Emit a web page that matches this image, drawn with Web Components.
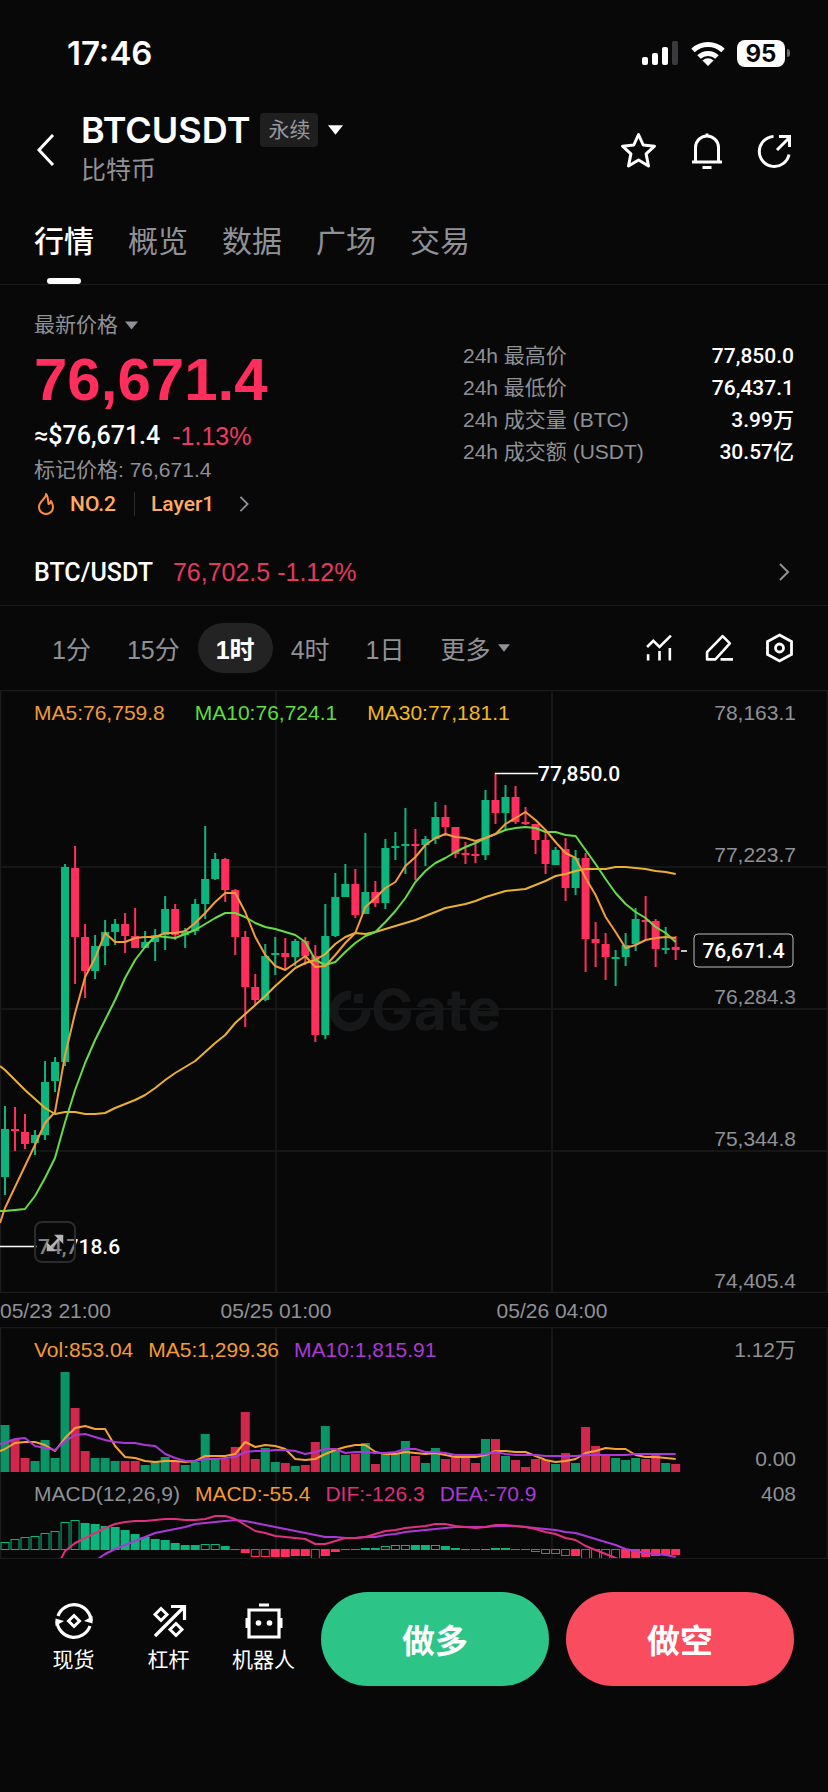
<!DOCTYPE html>
<html lang="zh-CN">
<head>
<meta charset="utf-8">
<meta name="viewport" content="width=device-width, initial-scale=1">
<title>BTCUSDT 永续</title>
<style>
  :root {
    --bg: #080808;
    --text: #ffffff;
    --muted: #909196;
    --line: #1b1b1d;
    --up: #0cb57d;
    --down: #ff2e5c;
    --side: 34px;
    --medium: Roboto, "Noto Sans CJK SC", sans-serif;
    --title: Inter, "Noto Sans CJK SC", sans-serif;
    --regular: "Liberation Sans", "Noto Sans CJK SC", sans-serif;
  }
  body {
    margin: 0;
    min-height: 100vh;
    background: var(--bg);
    color: var(--text);
    font-family: var(--regular);
    font-size: 21px;
  }
</style>
</head>
<body>
<status-bar time="17:46" battery="95"></status-bar>
<pair-header symbol="BTCUSDT" kind="永续">比特币</pair-header>
<page-tabs items="行情,概览,数据,广场,交易"></page-tabs>

<price-summary>
  <stat-row slot="stats" label="24h 最高价">77,850.0</stat-row>
  <stat-row slot="stats" label="24h 最低价">76,437.1</stat-row>
  <stat-row slot="stats" label="24h 成交量 (BTC)">3.99万</stat-row>
  <stat-row slot="stats" label="24h 成交额 (USDT)">30.57亿</stat-row>
</price-summary>

<spot-link pair="BTC/USDT">76,702.5 -1.12%</spot-link>
<interval-bar></interval-bar>

<kline-chart></kline-chart>
<time-axis>
  <span>05/23 21:00</span>
  <span>05/25 01:00</span>
  <span>05/26 04:00</span>
</time-axis>
<volume-chart></volume-chart>
<macd-chart></macd-chart>

<action-bar>
  <tool-button slot="tools" icon="spot">现货</tool-button>
  <tool-button slot="tools" icon="margin">杠杆</tool-button>
  <tool-button slot="tools" icon="robot">机器人</tool-button>
  <trade-button side="long">做多</trade-button>
  <trade-button side="short">做空</trade-button>
</action-bar>

<script>
// Estilos que comparten todos los componentes
const RESET = `
  :host, * { box-sizing: border-box; }
  button { font: inherit; color: inherit; background: none; border: 0; padding: 0; margin: 0; cursor: pointer; }
  a { color: inherit; text-decoration: none; }
`;

// Crea el shadow root y coloca el contenido del template
function mount(el, html) {
  const template = document.createElement("template");
  template.innerHTML = `<style>${RESET}</style>${html}`;
  el.attachShadow({ mode: "open" }).appendChild(template.content.cloneNode(true));
}

// ---------- Iconos: [viewBox, contenido] ----------
const ICONS = {
  back: ["0 0 20 34", `<path d="M18 2 4 17l14 15" stroke-width="3"/>`],
  next: ["0 0 12 20", `<path d="m2 2 8 8-8 8" stroke-width="2"/>`],
  caret: ["0 0 16 10", `<path d="M0 0h16L8 10z" fill="currentColor" stroke="none"/>`],
  star: ["0 0 38 38", `<path d="m18.500 3.500 4.700 10.500 11.300 1.200-8.400 7.700 2.400 12.100-10-6-10 6 2.400-12.100L2.500 15.200 13.800 14z" stroke-width="3" stroke-linejoin="round"/>`],
  bell: ["0 0 38 38", `<path d="M7.500 31V16.500a11.500 11.500 0 0 1 23 0V31M4 31h30M19 2.500v4" stroke-width="3"/><path d="M14.500 36.500h9" stroke-width="3"/>`],
  share: ["0 0 38 38", `<path d="M17.500 5.500a15 15 0 1 0 15.500 18" stroke-width="3"/><path d="M21 19 33 7M23 5.500h10.500V16" stroke-width="3"/>`],
  trend: ["0 0 28 28", `<path d="m2 13 6-6 6 6L25 2M3 20v6M14 17v9M24 14v12" stroke-width="2.500"/>`],
  pencil: ["0 0 28 28", `<path d="M2 25v-7L17 2.500l7 7L10 25zM15 25h12" stroke-width="2.500" stroke-linejoin="round"/>`],
  hexagon: ["0 0 28 30", `<path d="m14 2 12 6.500v13L14 28 2 21.500v-13z" stroke-width="2.800"/><circle cx="14" cy="15" r="4" stroke-width="2.800"/>`],
  flame: ["0 0 20 24", `<path d="M10 2c1 4-7 7-7 13 0 4 3 7 7 7s7-3 7-7c0-3-1-4-2-6-.500 2-1.500 3-2.500 3C12 8 12 4 10 2z" stroke-width="2" stroke-linejoin="round"/>`],
  spot: ["0 0 38 38", `<path d="M3 14a17 17 0 0 1 33 5M35 24a17 17 0 0 1-33-5" stroke-width="3.200"/><path d="M37.500 14v7.500L29 19zM.500 24v-7.500L9 19z" fill="currentColor" stroke="none"/><path d="m19 13.500 5.500 5.500-5.500 5.500-5.500-5.500z" stroke-width="3"/>`],
  margin: ["0 0 38 38", `<path d="M5 34 33 6M21 4.500h13.500V18" stroke-width="3.200"/><path d="m11 6.500 6 6-6 6-6-6zM26 21.500l6 6-6 6-6-6z" stroke-width="3"/>`],
  robot: ["0 0 38 38", `<path d="M4 8h30v27H4zM14 3h10" stroke-width="3.200"/><path d="M2 16v10M36 16v10" stroke-width="3"/><circle cx="13.500" cy="21" r="2.800" fill="currentColor" stroke="none"/><circle cx="24.500" cy="21" r="2.800" fill="currentColor" stroke="none"/>`],
  expand: ["0 0 24 24", `<path d="M5 19 19 5" stroke-width="2.500"/><path d="M11 3h10v10zM3 11v10h10z" fill="currentColor" stroke="none"/>`],
};

class UiIcon extends HTMLElement {
  connectedCallback() {
    const [box, body] = ICONS[this.getAttribute("name")];
    mount(this, `
      <style>
        :host { display: inline-flex; flex: none; }
        svg { width: 100%; height: 100%; display: block; }
      </style>
      <svg viewBox="${box}" fill="none" stroke="currentColor" aria-hidden="true">${body}</svg>`);
  }
}
customElements.define("ui-icon", UiIcon);

// ---------- Barra de estado ----------
class StatusBar extends HTMLElement {
  connectedCallback() {
    mount(this, `
      <style>
        :host { display: flex; align-items: center; justify-content: space-between; height: 106px; padding: 0 38px 0 67px; font-family: var(--title); }
        time { font-size: 33px; font-weight: 600; }
        .right { display: flex; align-items: center; gap: 11px; }
        .battery { display: flex; align-items: center; gap: 2px; }
        .level { width: 48px; height: 27px; line-height: 27px; border-radius: 8px; background: #fff; color: #080808; text-align: center; font-size: 24px; font-weight: 700; }
        .cap { width: 3px; height: 8px; border-radius: 0 3px 3px 0; background: #6b6b6b; }
      </style>
      <time>${this.getAttribute("time")}</time>
      <div class="right">
        <svg width="37" height="26" viewBox="0 0 37 26" fill="#fff">
          <rect x="0" y="17" width="6" height="8" rx="2"/>
          <rect x="10" y="13" width="6" height="12" rx="2"/>
          <rect x="20" y="7" width="6" height="18" rx="2"/>
          <rect x="30" y="1" width="6" height="24" rx="2" fill="#3a3a3c"/>
        </svg>
        <svg width="36" height="27" viewBox="0 0 36 27" fill="none" stroke="#fff" stroke-width="5">
          <path d="M3 10.500a22 22 0 0 1 30 0"/>
          <path d="M9 17a13 13 0 0 1 18 0"/>
          <path d="M12.500 20.500a8 8 0 0 1 11 0L18 26z" fill="#fff" stroke="none"/>
        </svg>
        <div class="battery"><span class="level">${this.getAttribute("battery")}</span><span class="cap"></span></div>
      </div>`);
  }
}
customElements.define("status-bar", StatusBar);

// ---------- Cabecera del par ----------
class PairHeader extends HTMLElement {
  connectedCallback() {
    mount(this, `
      <style>
        :host { display: flex; align-items: center; padding: 0 var(--side); height: 88px; }
        .back { width: 47px; height: 40px; display: flex; align-items: center; }
        .back ui-icon { width: 22px; height: 34px; }
        .title { flex: 1; line-height: 40px; }
        .pair { display: flex; align-items: center; gap: 10px; height: 40px; }
        h1 { margin: 0; font-family: var(--title); font-size: 36px; font-weight: 600; }
        .kind { height: 34px; line-height: 34px; padding: 0 8px; border-radius: 4px; background: #1f1f20; color: #97989c; }
        .pair ui-icon { width: 15px; height: 10px; }
        .name { margin: 0; color: var(--muted); font-size: 25px; }
        .tools { display: flex; gap: 30px; }
        .tools ui-icon { width: 38px; height: 38px; }
        .tools button { display: flex; }
      </style>
      <button class="back" aria-label="返回"><ui-icon name="back"></ui-icon></button>
      <div class="title">
        <button class="pair"><h1>${this.getAttribute("symbol")}</h1><span class="kind">${this.getAttribute("kind")}</span><ui-icon name="caret"></ui-icon></button>
        <p class="name"><slot></slot></p>
      </div>
      <div class="tools">
        <button aria-label="收藏"><ui-icon name="star"></ui-icon></button>
        <button aria-label="提醒"><ui-icon name="bell"></ui-icon></button>
        <button aria-label="分享"><ui-icon name="share"></ui-icon></button>
      </div>`);
  }
}
customElements.define("pair-header", PairHeader);

// ---------- Pestañas ----------
class PageTabs extends HTMLElement {
  connectedCallback() {
    const items = this.getAttribute("items").split(",");
    mount(this, `
      <style>
        :host { display: block; border-bottom: 1px solid var(--line); }
        nav { display: flex; gap: 34px; padding: 0 var(--side); }
        button { display: grid; grid-template-rows: 1fr 6px; justify-items: center; height: 90px; padding-top: 6px; color: var(--muted); font-size: 30px; }
        span { align-self: center; }
        .on { color: var(--text); font-weight: 500; }
        .on::after { content: ""; width: 34px; height: 6px; border-radius: 3px; background: #fff; }
      </style>
      <nav>${items.map((t, i) => `<button class="${i ? "" : "on"}"><span>${t}</span></button>`).join("")}</nav>`);
  }
}
customElements.define("page-tabs", PageTabs);

// ---------- Precio y datos de 24h ----------
class StatRow extends HTMLElement {
  connectedCallback() {
    mount(this, `
      <style>
        :host { display: flex; justify-content: space-between; height: 32px; line-height: 32px; }
        .label { color: var(--muted); }
        .value { font-family: var(--medium); font-weight: 500; }
      </style>
      <span class="label">${this.getAttribute("label")}</span>
      <span class="value"><slot></slot></span>`);
  }
}
customElements.define("stat-row", StatRow);

class PriceSummary extends HTMLElement {
  connectedCallback() {
    mount(this, `
      <style>
        :host { display: grid; grid-template-columns: 1fr 331px; padding: 24px var(--side) 16px; }
        .kind { display: flex; align-items: center; gap: 7px; line-height: 32px; height: 32px; color: var(--muted); }
        .kind ui-icon { width: 13px; height: 9px; }
        .last { line-height: 78px; height: 76px; font-size: 60px; font-weight: 700; color: var(--down); }
        .fiat { display: flex; gap: 12px; line-height: 38px; height: 38px; font-family: var(--medium); font-size: 25px; font-weight: 500; }
        .fiat .change { color: #f03a62; font-family: var(--regular); font-weight: 400; }
        .mark { line-height: 30px; height: 30px; color: var(--muted); }
        .tags { display: flex; align-items: center; height: 38px; color: #ffab62; font-family: var(--medium); font-weight: 500; }
        .tags .flame { width: 20px; height: 24px; margin: 0 14px 0 2px; color: #ff8c3a; }
        .tags i { width: 1px; height: 24px; margin: 0 16px 0 18px; background: #2a2a2c; }
        .tags .next { width: 12px; height: 18px; margin-left: 24px; color: var(--muted); }
        .stats { padding-top: 31px; }
      </style>
      <div>
        <button class="kind">最新价格<ui-icon name="caret"></ui-icon></button>
        <div class="last">76,671.4</div>
        <div class="fiat"><span>≈$76,671.4</span><span class="change">-1.13%</span></div>
        <div class="mark">标记价格: 76,671.4</div>
        <button class="tags"><ui-icon class="flame" name="flame"></ui-icon><span>NO.2</span><i></i><span>Layer1</span><ui-icon class="next" name="next"></ui-icon></button>
      </div>
      <div class="stats"><slot name="stats"></slot></div>`);
  }
}
customElements.define("price-summary", PriceSummary);

class SpotLink extends HTMLElement {
  connectedCallback() {
    mount(this, `
      <style>
        :host { display: block; border-bottom: 1px solid var(--line); }
        a { display: flex; align-items: center; gap: 20px; height: 66px; padding: 0 var(--side); font-size: 25px; }
        b { font-family: var(--medium); font-weight: 500; }
        .price { flex: 1; color: #e23a60; }
        ui-icon { width: 12px; height: 20px; margin-right: 4px; color: var(--muted); }
      </style>
      <a href="#spot"><b>${this.getAttribute("pair")}</b><span class="price"><slot></slot></span><ui-icon name="next"></ui-icon></a>`);
  }
}
customElements.define("spot-link", SpotLink);

// ---------- Selector de intervalo ----------
class IntervalBar extends HTMLElement {
  connectedCallback() {
    mount(this, `
      <style>
        :host { display: flex; align-items: center; justify-content: space-between; height: 84px; padding: 0 var(--side); font-size: 25px; color: var(--muted); }
        div { display: flex; align-items: center; }
        .list button { display: flex; align-items: center; gap: 8px; height: 50px; padding: 0 18px; border-radius: 25px; }
        .list .on { background: #232324; color: var(--text); font-weight: 600; }
        .list ui-icon { width: 12px; height: 8px; }
        .tools { gap: 31px; color: var(--text); }
        .tools button { display: flex; }
        .tools ui-icon { width: 29px; height: 30px; }
      </style>
      <div class="list">
        <button>1分</button><button>15分</button><button class="on">1时</button><button>4时</button><button>1日</button>
        <button>更多<ui-icon name="caret"></ui-icon></button>
      </div>
      <div class="tools">
        <button aria-label="指标"><ui-icon name="trend"></ui-icon></button>
        <button aria-label="画图"><ui-icon name="pencil"></ui-icon></button>
        <button aria-label="设置"><ui-icon name="hexagon"></ui-icon></button>
      </div>`);
  }
}
customElements.define("interval-bar", IntervalBar);

// ---------- Datos ----------
// Cada vela: tipo, máximo, techo del cuerpo, base del cuerpo, mínimo, volumen
const CANDLES = [
  "G 416 439 487 505 47", "R 417 439 441 461 33", "R 424 442 454 459 14", "G 440 445 453 465 11",
  "G 371 392 445 450 32", "G 367 372 391 402 14", "G 174 177 372 376 100", "R 156 178 247 294 64",
  "R 234 247 281 308 21", "G 245 256 281 289 14", "G 230 242 256 275 14", "G 229 234 242 255 11",
  "R 223 234 246 263 11", "R 218 246 258 258 11", "G 241 252 258 258 7", "G 239 245 252 271 10",
  "G 206 219 245 260 15", "R 214 219 245 250 10", "G 238 241 245 258 7", "G 209 214 241 245 10",
  "G 136 189 214 229 38", "G 163 169 189 190 13", "R 168 169 200 212 13", "R 199 200 247 265 25",
  "R 241 247 297 337 60", "R 284 297 310 315 13", "G 254 266 310 311 24", "G 247 263 265 285 10",
  "R 248 263 267 279 9", "G 249 251 267 276 6", "R 247 251 266 275 7", "R 255 266 345 352 30",
  "G 214 246 345 349 46", "G 183 207 246 247 22", "G 174 194 207 207 17", "R 179 194 225 228 18",
  "G 143 202 224 224 29", "R 191 202 213 217 8", "G 149 158 213 219 18", "G 142 156 158 170 18",
  "G 118 154 155 184 31", "R 139 154 155 190 16", "G 146 149 155 176 9", "G 112 127 149 154 24",
  "R 115 127 137 146 13", "R 137 137 164 168 16", "R 152 163 165 174 15", "R 152 164 165 173 9",
  "G 100 110 165 170 33", "R 83 110 123 134 33", "G 95 107 123 140 16", "R 96 107 132 134 12",
  "R 117 132 134 135 5", "R 134 134 150 164 13", "R 143 150 174 184 12", "G 157 160 175 175 8",
  "R 148 159 198 211 19", "G 160 168 198 205 9", "R 163 168 249 282 45", "R 232 249 253 277 26",
  "R 243 254 267 290 16", "G 260 267 268 296 14", "G 243 255 267 276 12", "G 218 229 254 261 14",
  "R 206 230 231 249 13", "R 229 231 259 277 18", "G 237 258 259 264 9", "R 246 257 260 270 8",
].map(row => {
  const [kind, ...n] = row.split(" ");
  const [high, top, bottom, low, vol] = n.map(Number);
  return { color: kind === "G" ? "var(--up)" : "var(--down)", high, top, bottom, low, vol };
});

const MA5 = [518,497,476,455,433,422,365,323,287,268,243,252,252,248,247,247,243,243,241,233,223,212,203,203,222,247,265,276,280,273,266,277,276,265,253,243,217,208,198,192,176,167,155,148,144,147,148,151,148,144,134,128,122,130,140,152,163,168,188,205,227,242,258,255,250,248,247,248];
const MA10 = [521,520,519,506,488,468,432,400,373,350,330,310,288,270,257,246,247,248,244,240,234,228,223,223,227,233,237,239,242,245,252,270,275,272,262,253,246,242,232,221,208,192,181,173,168,162,157,153,148,144,140,138,137,138,142,142,145,146,160,174,189,203,214,222,228,237,243,252];
const MA30 = [380,390,400,409,418,424,422,422,424,424,423,418,414,410,405,398,390,383,377,371,362,353,345,333,324,315,306,296,287,278,273,270,264,254,247,243,244,242,239,236,233,230,226,222,218,216,214,211,207,204,201,200,199,195,191,186,184,181,179,179,179,177,177,178,179,181,182,184];
const VOL5 = [122,116,115,115,118,124,111,101,99,102,102,119,130,131,134,135,134,134,135,134,129,129,129,127,115,120,118,119,122,132,133,132,127,123,120,118,118,125,127,127,125,126,127,126,128,130,130,130,128,124,124,125,125,129,133,135,134,132,126,124,121,122,122,128,130,130,131,132];
const VOL10 = [116,112,111,119,121,123,114,108,107,110,113,115,116,116,118,119,127,131,134,134,132,132,131,130,125,124,124,123,123,124,127,125,122,122,126,125,125,126,126,125,122,122,125,125,126,128,128,128,127,125,127,128,128,128,129,129,129,129,128,128,128,128,128,127,127,127,127,127];
// Histograma: "h" marca las barras huecas
const HIST = "8h 11h 13h 14h 17h 19h 28h 30h 27 26 24 23 20 16 13 11 10 7 5 5 6h 6h 4 0 -4 -8h -8h -8 -8 -7 -7 -12h -7 -3 0 0 2 2 4h 5h 5h 5 5 5h 4 2 1 0 1 2 2 0 -1 -3h -5h -5h -7h -7 -12h -12h -12h -12h -9 -9 -8 -7 -6 -6".split(" ");
const DIF = [130,124,118,112,106,98,79,71,66,61,56,52,50,49,49,48,47,47,48,48,47,44,44,47,53,59,61,64,65,66,67,72,72,69,66,66,65,62,59,58,56,55,54,52,52,54,55,56,55,53,53,54,55,57,60,62,66,68,74,78,82,86,90,94,97,99,101,103];
const DEA = [130,125,120,115,110,106,102,98,94,89,82,77,73,69,65,61,59,57,55,52,51,50,49,48,49,51,53,55,57,59,61,63,65,65,66,66,65,65,63,62,60,59,58,57,56,55,55,55,55,54,54,54,55,56,57,58,60,61,64,67,70,73,77,79,81,82,83,85];

// Centro horizontal de la vela i
const cx = i => 5 + i * 10.01;
const line = (values, color, first) => {
  const points = values.map((y, i) => `${cx(i).toFixed(1)},${y}`).join(" ");
  return `<polyline points="${first ? `0,${first} ` : ""}${points}" stroke="${color}" stroke-width="2" stroke-linejoin="round" fill="none"/>`;
};
const columns = height => [0.5, 276, 552, 827.5].map(x => `<path class="grid" d="M${x} 0V${height}"/>`).join("");

// Estilos comunes de los tres gráficos: dibujo y textos en la misma celda
const CHART = `
  :host { display: grid; position: relative; line-height: 24px; color: var(--muted); }
  svg, .legend, .scale { grid-area: 1 / 1; }
  svg { width: 100%; height: auto; display: block; }
  .grid { stroke: var(--line); stroke-width: 1.500; fill: none; }
  .legend { display: flex; align-items: start; gap: 15px; padding: 11px var(--side) 0; }
  .scale { display: flex; flex-direction: column; justify-content: space-between; align-items: end; padding: 11px 32px 0 0; }
  .scale span { height: 24px; }
`;

class KlineChart extends HTMLElement {
  connectedCallback() {
    const candles = CANDLES.map((c, i) => {
      const x = cx(i);
      const h = Math.max(c.bottom - c.top, 2);
      return `<path d="M${x} ${c.high}V${c.low}" stroke="${c.color}" stroke-width="2"/><rect x="${x - 4}" y="${c.top}" width="8" height="${h}" fill="${c.color}"/>`;
    }).join("");
    mount(this, `
      <style>
        ${CHART}
        .legend { gap: 30px; }
        text { font-family: var(--medium); font-size: 21px; font-weight: 500; fill: #fff; }
        .mark { font-family: var(--title); font-size: 57px; font-weight: 700; fill: #151718; }
        .full { position: absolute; left: 34px; bottom: 30px; width: 42px; height: 42px; border: 2px solid #2b2b2d; border-radius: 8px; background: rgba(8, 8, 8, 0.500); color: #b5b5b5; }
        .full ui-icon { width: 22px; height: 22px; vertical-align: middle; }
      </style>
      <svg viewBox="0 0 828 603">
        ${[0.5, 177, 319, 461, 602.5].map(y => `<path class="grid" d="M0 ${y}H828"/>`).join("")}
        ${columns(603)}
        <path d="M351 305a16 16 0 1 0 15 15" fill="none" stroke="#151718" stroke-width="9"/>
        <path d="M354 304h9v9h-9z" fill="#151718"/>
        <text class="mark" x="371" y="340">Gate</text>
        ${candles}
        ${line(MA30, "#eab12f", 376)}
        ${line(MA10, "#66dd45", 521)}
        ${line(MA5, "#f29c3c", 533)}
        <path d="M495 83.500h43M0 556.500h37M681 261h6" stroke="#fff" stroke-width="1.500"/>
        <text x="538" y="91">77,850.0</text>
        <text x="38" y="564">74,718.6</text>
        <rect x="694" y="244" width="99" height="33" rx="4" fill="#080808" stroke="#bcbcbc"/>
        <text x="743.500" y="268" text-anchor="middle">76,671.4</text>
      </svg>
      <div class="legend">
        <span style="color:#f09a3e">MA5:76,759.8</span>
        <span style="color:#5ede3c">MA10:76,724.1</span>
        <span style="color:#f3b71f">MA30:77,181.1</span>
      </div>
      <div class="scale"><span>78,163.1</span><span>77,223.7</span><span>76,284.3</span><span>75,344.8</span><span>74,405.4</span></div>
      <button class="full" aria-label="全屏"><ui-icon name="expand"></ui-icon></button>`);
  }
}
customElements.define("kline-chart", KlineChart);

class TimeAxis extends HTMLElement {
  connectedCallback() {
    mount(this, `
      <style>
        :host { display: grid; grid-template-columns: 1fr 2fr 2fr 1fr; height: 34px; line-height: 36px; color: var(--muted); text-align: center; white-space: nowrap; }
        ::slotted(:first-child) { text-align: left; }
      </style>
      <slot></slot>`);
  }
}
customElements.define("time-axis", TimeAxis);

class VolumeChart extends HTMLElement {
  connectedCallback() {
    const bars = CANDLES.map((c, i) => `<rect x="${cx(i) - 4.5}" y="${145 - c.vol}" width="9" height="${c.vol}" fill="${c.color}" opacity="0.820"/>`).join("");
    mount(this, `
      <style>${CHART} .scale { padding-bottom: 1px; }</style>
      <svg viewBox="0 0 828 145">
        <path class="grid" d="M0 .5H828"/>
        ${columns(145)}
        ${bars}
        ${line(VOL5, "#f5a233", 124)}
        ${line(VOL10, "#aa39d6", 117)}
      </svg>
      <div class="legend">
        <span style="color:#f39b34">Vol:853.04</span>
        <span style="color:#f39b34">MA5:1,299.36</span>
        <span style="color:#aa39d6">MA10:1,815.91</span>
      </div>
      <div class="scale"><span>1.12万</span><span>0.00</span></div>`);
  }
}
customElements.define("volume-chart", VolumeChart);

class MacdChart extends HTMLElement {
  connectedCallback() {
    const bars = HIST.map((item, i) => {
      const v = parseInt(item);
      const color = v > 0 ? "var(--up)" : "var(--down)";
      const h = Math.max(Math.abs(v), 1);
      const y = v > 0 ? 78 - v : 77;
      return item.endsWith("h")
        ? `<rect x="${cx(i) - 4}" y="${y + 0.5}" width="8" height="${h - 1}" fill="none" stroke="${color}"/>`
        : `<rect x="${cx(i) - 4.5}" y="${y}" width="9" height="${h}" fill="${color}"/>`;
    }).join("");
    mount(this, `
      <style>${CHART} svg { overflow: hidden; } :host { border-bottom: 1px solid var(--line); } .legend, .scale { padding-top: 10px; }</style>
      <svg viewBox="0 0 828 86">
        ${columns(86)}
        ${bars}
        ${line(DEA, "#aa39d6")}
        ${line(DIF, "#e0307f")}
      </svg>
      <div class="legend">
        <span>MACD(12,26,9)</span>
        <span style="color:#f39b34">MACD:-55.4</span>
        <span style="color:#dd2f78">DIF:-126.3</span>
        <span style="color:#aa39d6">DEA:-70.9</span>
      </div>
      <div class="scale"><span>408</span></div>`);
  }
}
customElements.define("macd-chart", MacdChart);

// ---------- Barra inferior ----------
class ToolButton extends HTMLElement {
  connectedCallback() {
    mount(this, `
      <style>
        :host { display: block; width: 95px; }
        button { display: flex; flex-direction: column; align-items: center; gap: 4px; width: 100%; padding-top: 10px; line-height: 32px; }
        ui-icon { width: 38px; height: 38px; }
      </style>
      <button><ui-icon name="${this.getAttribute("icon")}"></ui-icon><span><slot></slot></span></button>`);
  }
}
customElements.define("tool-button", ToolButton);

class TradeButton extends HTMLElement {
  connectedCallback() {
    mount(this, `
      <style>
        :host { display: block; flex: 1; }
        button { width: 100%; height: 94px; border-radius: 47px; background: #2cc487; font-size: 33px; font-weight: 700; }
        :host([side="short"]) button { background: #f94d5f; }
      </style>
      <button><slot></slot></button>`);
  }
}
customElements.define("trade-button", TradeButton);

class ActionBar extends HTMLElement {
  connectedCallback() {
    mount(this, `
      <style>
        :host { display: flex; gap: 10px; padding: 33px var(--side) 40px 26px; }
        .tools { display: flex; }
        .trade { display: flex; flex: 1; gap: 17px; }
      </style>
      <div class="tools"><slot name="tools"></slot></div>
      <div class="trade"><slot></slot></div>`);
  }
}
customElements.define("action-bar", ActionBar);
</script>
</body>
</html>
